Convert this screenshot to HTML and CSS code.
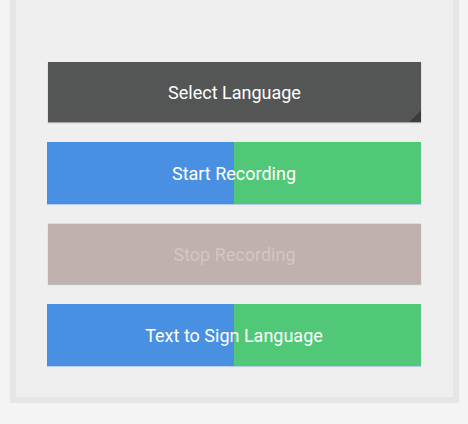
FILE: index.html
```html
<!DOCTYPE html>
<html>
<head>
<meta charset="utf-8">
<link rel="stylesheet" href="styles.css">
</head>
<body>
<div class="panel">
  <div class="controls">
    <div class="btn select-lang">Select Language</div>
    <div class="btn split">Start Recording</div>
    <div class="btn disabled">Stop Recording</div>
    <div class="btn split">Text to Sign Language</div>
  </div>
</div>
</body>
</html>
```
FILE: styles.css
```css
html, body {
  margin: 0;
  padding: 0;
}
body {
  background: #f4f4f4;
  font-family: Roboto, "Liberation Sans", sans-serif;
  width: 468px;
  height: 424px;
  overflow: hidden;
  box-sizing: border-box;
  padding: 0 9px 0 10px;
}
.panel {
  background: #efefef;
  border: 6px solid #e6e6e6;
  border-top: none;
  box-sizing: border-box;
  width: 449px;
  padding: 62px 32px 31px 31px;
}
.controls {
  display: flex;
  flex-direction: column;
  gap: 20px;
}
.btn {
  position: relative;
  display: flex;
  align-items: center;
  justify-content: center;
  color: #fff;
  font-size: 18px;
  box-sizing: border-box;
}
.select-lang {
  margin-left: 1px;
  height: 60px;
  background: #545655;
  box-shadow: 0 1px 1px rgba(0,0,0,0.3);
}
.select-lang::after {
  content: "";
  position: absolute;
  right: 0;
  bottom: 0;
  width: 11px;
  height: 11px;
  background: linear-gradient(to bottom right, transparent 50%, #3b3c3b 50%);
}
.split {
  height: 62px;
  background: linear-gradient(to right, #4a90e2 50%, #51c878 50%);
  box-shadow: 0 1px 0 rgba(74,144,226,0.35);
}
.disabled {
  margin-left: 1px;
  height: 60px;
  background: #c0b0ae;
  color: #d4c6c4;
  box-shadow: 0 1px 1px rgba(0,0,0,0.2), 0 -1px 0 rgba(230,200,196,0.6);
}
```
